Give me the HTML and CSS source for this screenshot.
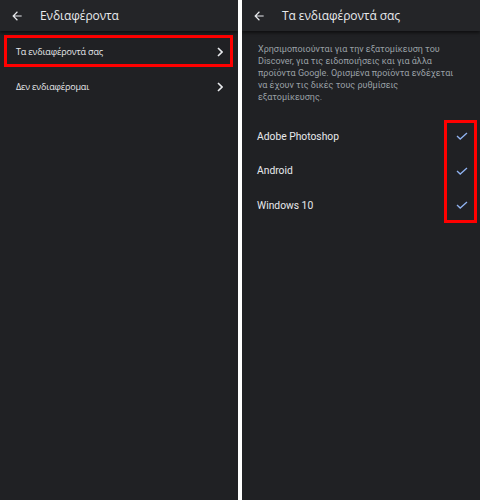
FILE: index.html
```html
<!DOCTYPE html>
<html lang="el">
<head>
<meta charset="utf-8">
<title>Ενδιαφέροντα</title>
<link rel="stylesheet" href="styles.css">
</head>
<body>
<div class="screens">
  <section class="panel">
    <header class="appbar">
      <svg class="back" viewBox="0 0 24 24" width="14" height="14"><path d="M20 11H7.83l5.59-5.59L12 4l-8 8 8 8 1.41-1.41L7.83 13H20v-2z" fill="#e8eaed"/></svg>
      <h1 class="title">Ενδιαφέροντα</h1>
    </header>
    <ul class="menu">
      <li class="menu-row"><span>Τα ενδιαφέροντά σας</span><svg class="chev" viewBox="0 0 6 10" width="6" height="10"><path d="M1 1l4 4-4 4" fill="none" stroke="#e8eaed" stroke-width="1.6"/></svg></li>
      <li class="menu-row"><span>Δεν ενδιαφέρομαι</span><svg class="chev" viewBox="0 0 6 10" width="6" height="10"><path d="M1 1l4 4-4 4" fill="none" stroke="#e8eaed" stroke-width="1.6"/></svg></li>
    </ul>
    <div class="mark mark-left"></div>
  </section>
  <section class="panel">
    <header class="appbar">
      <svg class="back" viewBox="0 0 24 24" width="14" height="14"><path d="M20 11H7.83l5.59-5.59L12 4l-8 8 8 8 1.41-1.41L7.83 13H20v-2z" fill="#e8eaed"/></svg>
      <h1 class="title">Τα ενδιαφέροντά σας</h1>
    </header>
    <p class="desc">Χρησιμοποιούνται για την εξατομίκευση του<br>Discover, για τις ειδοποιήσεις και για άλλα<br>προϊόντα Google. Ορισμένα προϊόντα ενδέχεται<br>να έχουν τις δικές τους ρυθμίσεις<br>εξατομίκευσης.</p>
    <ul class="topics">
      <li class="topic"><span>Adobe Photoshop</span><svg class="check" viewBox="0 0 12 8" width="12" height="8"><polyline points="1,4 4.2,7 11,1" fill="none" stroke="#8fb2f0" stroke-width="1.3"/></svg></li>
      <li class="topic"><span>Android</span><svg class="check" viewBox="0 0 12 8" width="12" height="8"><polyline points="1,4 4.2,7 11,1" fill="none" stroke="#8fb2f0" stroke-width="1.3"/></svg></li>
      <li class="topic"><span>Windows 10</span><svg class="check" viewBox="0 0 12 8" width="12" height="8"><polyline points="1,4 4.2,7 11,1" fill="none" stroke="#8fb2f0" stroke-width="1.3"/></svg></li>
    </ul>
    <div class="mark mark-right"></div>
  </section>
</div>
</body>
</html>
```
FILE: styles.css
```css
html, body {
  margin: 0;
  padding: 0;
  background: #ffffff;
}
.screens {
  display: flex;
  gap: 4px;
  width: 480px;
  height: 500px;
}
.panel {
  position: relative;
  width: 238px;
  height: 500px;
  background: #202124;
  font-family: Roboto, "Noto Sans", sans-serif;
  color: #e8eaed;
  overflow: hidden;
}
.appbar {
  display: flex;
  align-items: center;
  height: 31px;
  padding-left: 10px;
  background: #242528;
  box-shadow: 0 2px 3px rgba(0, 0, 0, 0.55);
  position: relative;
  z-index: 1;
}
.back {
  display: block;
  flex: none;
}
.title {
  margin: 0 0 0 16px;
  font-family: "Open Sans", Roboto, sans-serif;
  font-weight: 400;
  font-size: 12px;
  letter-spacing: -0.1px;
  color: #e8eaed;
}
.menu {
  list-style: none;
  margin: 0;
  padding: 3px 0 0;
}
.menu-row {
  display: flex;
  align-items: center;
  justify-content: space-between;
  height: 35px;
  padding: 0 15px 0 16px;
  font-family: "Open Sans", Roboto, sans-serif;
  font-size: 9px;
  letter-spacing: -0.15px;
}
.chev {
  display: block;
}
.desc {
  margin: 0;
  padding: 12px 16px 0;
  font-size: 9px;
  line-height: 12px;
  color: #9aa0a6;
}
.topics {
  list-style: none;
  margin: 0;
  padding: 16px 0 0;
}
.topic {
  display: flex;
  align-items: center;
  justify-content: space-between;
  height: 34.5px;
  padding: 0 12px 0 15px;
  font-size: 10.3px;
}
.check {
  display: block;
}
.mark {
  position: absolute;
  box-sizing: border-box;
  border: 3px solid #ff0000;
}
.mark-left {
  left: 4px;
  top: 35px;
  width: 229px;
  height: 32px;
}
.mark-right {
  left: 202px;
  top: 120px;
  width: 33px;
  height: 103px;
}
```
